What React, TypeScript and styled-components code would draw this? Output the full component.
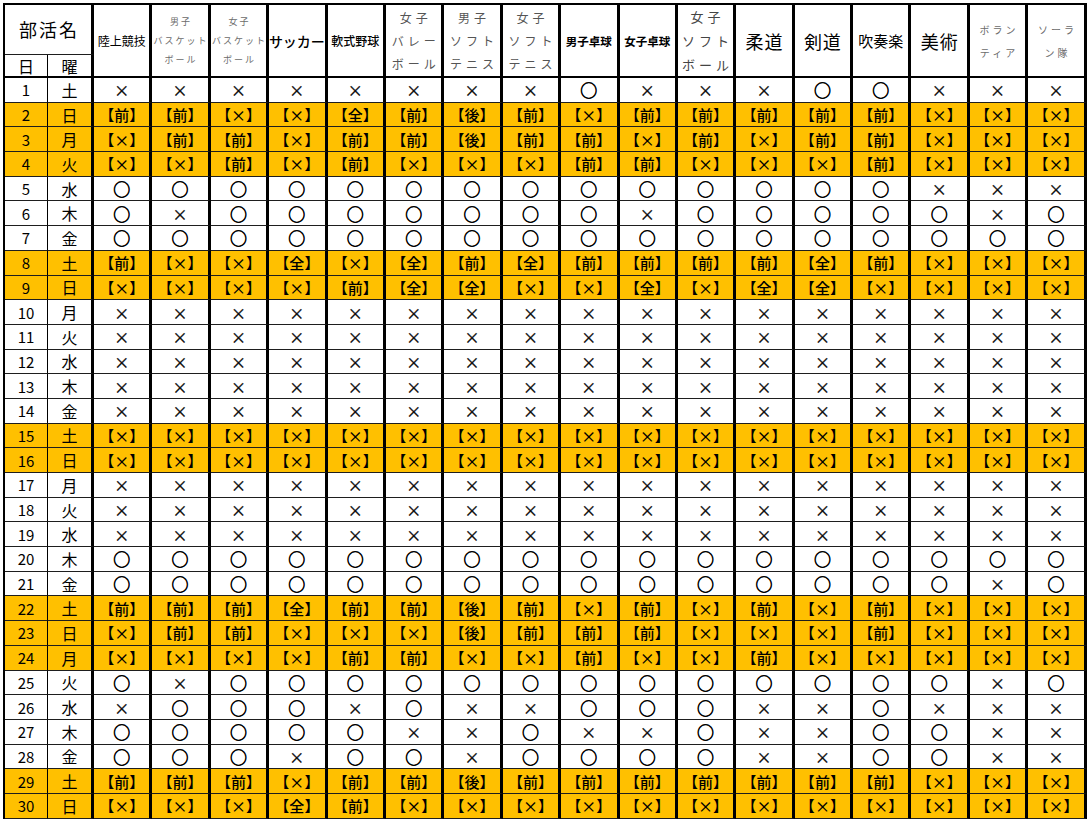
import styled, {createGlobalStyle} from "styled-components"

type Mark = "o" | "x" | "前" | "後" | "全"

interface Club {
  lines: string[];
  size: number;
  weight?: number;
  tone?: string;
  spacing?: number;
  leading?: number;
}

const clubs: Club[] = [
  {lines: ["陸上競技"], size: 12},
  {lines: ["男子", "バスケット", "ボール"], size: 9, tone: "#6b6b6b", spacing: 2, leading: 19},
  {lines: ["女子", "バスケット", "ボール"], size: 9, tone: "#6b6b6b", spacing: 2, leading: 19},
  {lines: ["サッカー"], size: 14, weight: 500},
  {lines: ["軟式野球"], size: 12, weight: 500},
  {lines: ["女子", "バレー", "ボール"], size: 12, tone: "#555", spacing: 4, leading: 23},
  {lines: ["男子", "ソフト", "テニス"], size: 12, tone: "#555", spacing: 4, leading: 23},
  {lines: ["女子", "ソフト", "テニス"], size: 12, tone: "#555", spacing: 4, leading: 23},
  {lines: ["男子卓球"], size: 11.5, weight: 700},
  {lines: ["女子卓球"], size: 11.5, weight: 700},
  {lines: ["女子", "ソフト", "ボール"], size: 13, tone: "#444", spacing: 4, leading: 24},
  {lines: ["柔道"], size: 18, spacing: 1},
  {lines: ["剣道"], size: 18, spacing: 1},
  {lines: ["吹奏楽"], size: 15},
  {lines: ["美術"], size: 18, spacing: 1},
  {lines: ["ボラン", "ティア"], size: 10, tone: "#6b6b6b", spacing: 3, leading: 23},
  {lines: ["ソーラ", "ン隊"], size: 10, tone: "#6b6b6b", spacing: 3, leading: 23},
]

const weekdays = ["土", "日", "月", "火", "水", "木", "金"]
const holidays = [2, 3, 4, 8, 9, 15, 16, 22, 23, 24, 29, 30]

// one string per day, one character per club
const schedule: string[] = [
  "xxxxxxxxoxxxooxxx",
  "前前xx全前後前x前前前前前xxx",
  "x前前x前前後前前x前x前前xxx",
  "xx前x前xxx前前xxx前xxx",
  "ooooooooooooooxxx",
  "oxoooooooxoooooxo",
  "ooooooooooooooooo",
  "前xx全x全前全前前前前全前xxx",
  "xxxx前全全xx全x全全xxxx",
  "xxxxxxxxxxxxxxxxx",
  "xxxxxxxxxxxxxxxxx",
  "xxxxxxxxxxxxxxxxx",
  "xxxxxxxxxxxxxxxxx",
  "xxxxxxxxxxxxxxxxx",
  "xxxxxxxxxxxxxxxxx",
  "xxxxxxxxxxxxxxxxx",
  "xxxxxxxxxxxxxxxxx",
  "xxxxxxxxxxxxxxxxx",
  "xxxxxxxxxxxxxxxxx",
  "ooooooooooooooooo",
  "oooooooooooooooxo",
  "前前前全前前後前x前x前x前xxx",
  "x前前xxx後前前前xxx前xxx",
  "xxxx前前xx前xx前xxxxx",
  "oxoooooooooooooxo",
  "xoooxoxxoooxxoxxx",
  "oooooxxoxxoxxooxx",
  "oooxooxooooxxooxx",
  "前前前x前前後前前前前前前前xxx",
  "xxx全前xxxxxxxxxxxx",
]

const renderMark = (mark: Mark, holiday: boolean) => {
  if (holiday) {
    return (
      <Bracket>
        【<Inner>{mark === "x" ? "×" : mark}</Inner>】
      </Bracket>
    )
  }
  return mark === "o" ? <Circle>○</Circle> : <Cross>×</Cross>
}

export default function App() {
  return (
    <>
      <GlobalStyle />
      <Sheet>
        <TitleCell>部活名</TitleCell>
        {clubs.map((club) => (
          <ClubHead
            key={club.lines.join("")}
            $size={club.size}
            $weight={club.weight ?? 400}
            $tone={club.tone ?? "#000"}
            $spacing={club.spacing ?? 0}
            $leading={club.leading ?? 18}
          >
            {club.lines.map((line) => (
              <span key={line}>{line}</span>
            ))}
          </ClubHead>
        ))}
        <SubHead $thin>日</SubHead>
        <SubHead>曜</SubHead>
        {schedule.map((marks, index) => {
          const day = index + 1
          const holiday = holidays.includes(day)
          return [
            <DayCell key={`d${day}`} $holiday={holiday}>{day}</DayCell>,
            <DowCell key={`w${day}`} $holiday={holiday}>{weekdays[index % 7]}</DowCell>,
            ...Array.from(marks).map((mark, col) => (
              <MarkCell key={`${day}-${col}`} $holiday={holiday}>
                {renderMark(mark as Mark, holiday)}
              </MarkCell>
            )),
          ]
        })}
      </Sheet>
    </>
  )
}

const GlobalStyle = createGlobalStyle`
    * {
        box-sizing: border-box;
    }

    body {
        margin: 0;
        padding: 3px 0 0 3px;
        background: #fff;
        font-family: "Noto Sans CJK JP", "Noto Sans", sans-serif;
        color: #000;
    }
`

const Sheet = styled.div`
    display: grid;
    grid-template-columns: 43px 46px repeat(17, 58.4px);
    grid-template-rows: 50px 23px repeat(30, 24.7px);
    width: max-content;
    border-left: 2px solid #000;
    border-top: 2px solid #000;
`

const Cell = styled.div`
    display: flex;
    align-items: center;
    justify-content: center;
    border-right: 3px solid #000;
    border-bottom: 1px solid #1e1e1e;
    overflow: hidden;
    white-space: nowrap;
    line-height: 1;
`

const TitleCell = styled(Cell)`
    grid-column: span 2;
    font-size: 18px;
    letter-spacing: 2px;
    padding-left: 2px;
    padding-bottom: 2px;
`

const SubHead = styled(Cell)<{$thin?: boolean}>`
    font-size: 16px;
    border-bottom-width: 2px;
    border-bottom-color: #000;
    border-right-width: ${({$thin}) => ($thin ? "1px" : "3px")};
`

const ClubHead = styled(Cell)<{
  $size: number;
  $weight: number;
  $tone: string;
  $spacing: number;
  $leading: number;
}>`
    grid-row: span 2;
    flex-direction: column;
    border-bottom-width: 2px;
    border-bottom-color: #000;
    font-size: ${({$size}) => $size}px;
    font-weight: ${({$weight}) => $weight};
    color: ${({$tone}) => $tone};
    letter-spacing: ${({$spacing}) => $spacing}px;
    padding-left: ${({$spacing}) => $spacing}px;
    line-height: ${({$leading}) => $leading}px;
`

const RowCell = styled(Cell)<{$holiday: boolean}>`
    background: ${({$holiday}) => ($holiday ? "#ffc000" : "#fff")};
`

const DayCell = styled(RowCell)`
    border-right-width: 1px;
    font-size: 15px;
`

const DowCell = styled(RowCell)`
    font-size: 16px;
`

const MarkCell = styled(RowCell)`
    font-size: 14px;
`

const Circle = styled.span`
    font-size: 17px;
    line-height: 1;
    -webkit-text-stroke: 0.6px #000;
`

const Cross = styled.span`
    font-size: 15px;
    line-height: 1;
    -webkit-text-stroke: 0.3px #000;
`

const Bracket = styled.span`
    font-size: 15px;
    line-height: 1;
    font-weight: 500;
`

const Inner = styled.span`
    font-feature-settings: "fwid";
`
